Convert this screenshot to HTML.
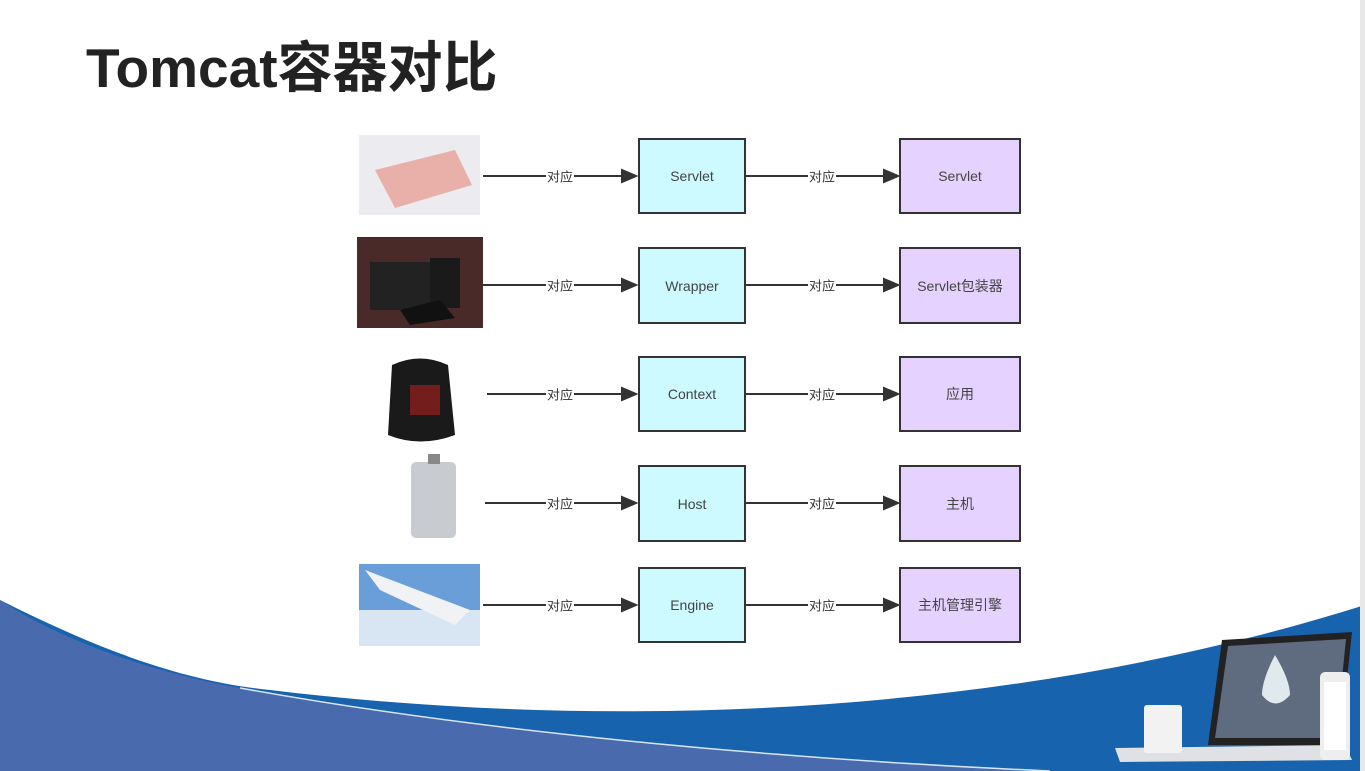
<!DOCTYPE html>
<html><head><meta charset="utf-8"><style>
body{margin:0;width:1365px;height:771px;position:relative;overflow:hidden;background:#fff;font-family:"Liberation Sans","Noto Sans CJK SC",sans-serif}
h1{position:absolute;left:86px;top:23px;margin:0;font-size:55px;font-weight:bold;color:#222;letter-spacing:0}
.box{position:absolute;border:2px solid #333;box-sizing:border-box;display:flex;align-items:center;justify-content:center;font-size:14px;color:#444}
.c{left:638px;width:108px;background:#ccfaff}
.p{left:899px;width:122px;background:#e6d2ff}
.lbl{position:absolute;font-size:13px;color:#333;background:#fff;padding:0 1px;transform:translate(-50%,-50%)}
</style></head><body>
<svg style="position:absolute;left:0;top:0" width="1365" height="771">
<path d="M0,600 C80,640 170,680 270,690 C600,730 1000,720 1365,605 L1365,771 L0,771 Z" fill="#1863ad"/>
<path d="M0,600 C60,640 150,672 240,688 C500,735 800,760 1050,771 L0,771 Z" fill="#4a6aae"/>
<path d="M240,688 C500,735 800,760 1050,771" stroke="#d8e4f4" stroke-width="1.5" fill="none"/>
<rect x="1360" y="0" width="5" height="771" fill="#e8e8e8"/>
<g stroke="#333" stroke-width="2" fill="#333">
<line x1="483" y1="176" x2="626" y2="176"/><polygon points="622,170 636,176 622,182"/>
<line x1="746" y1="176" x2="886" y2="176"/><polygon points="884,170 898,176 884,182"/>
<line x1="483" y1="285" x2="626" y2="285"/><polygon points="622,279 636,285 622,291"/>
<line x1="746" y1="285" x2="886" y2="285"/><polygon points="884,279 898,285 884,291"/>
<line x1="487" y1="394" x2="626" y2="394"/><polygon points="622,388 636,394 622,400"/>
<line x1="746" y1="394" x2="886" y2="394"/><polygon points="884,388 898,394 884,400"/>
<line x1="485" y1="503" x2="626" y2="503"/><polygon points="622,497 636,503 622,509"/>
<line x1="746" y1="503" x2="886" y2="503"/><polygon points="884,497 898,503 884,509"/>
<line x1="483" y1="605" x2="626" y2="605"/><polygon points="622,599 636,605 622,611"/>
<line x1="746" y1="605" x2="886" y2="605"/><polygon points="884,599 898,605 884,611"/>
</g>
<rect x="359" y="135" width="121" height="80" fill="#ecebf0"/>
<polygon points="375,170 455,150 472,185 395,208" fill="#e8b0a8"/>
<rect x="357" y="237" width="126" height="91" fill="#4a2a28"/>
<rect x="370" y="262" width="60" height="48" fill="#222"/><rect x="430" y="258" width="30" height="50" fill="#1a1a1a"/><polygon points="400,310 440,300 455,318 410,325" fill="#111"/>
<path d="M392,365 Q420,352 448,365 L455,435 Q420,448 388,435 Z" fill="#1a1a1a"/><rect x="410" y="385" width="30" height="30" fill="#b02020" opacity=".6"/>
<rect x="411" y="462" width="45" height="76" rx="5" fill="#c8cbd0"/><rect x="428" y="454" width="12" height="10" fill="#888"/>
<rect x="359" y="564" width="121" height="82" fill="#6a9ed8"/><rect x="359" y="610" width="121" height="36" fill="#d8e6f4"/><polygon points="365,570 470,610 455,625 380,590" fill="#f0f2f6"/>
<polygon points="1222,640 1352,632 1340,745 1208,745" fill="#222"/>
<polygon points="1228,646 1346,639 1336,738 1215,738" fill="#5f6b7e"/>
<path d="M1275,655 Q1262,680 1262,695 Q1275,712 1290,695 Q1290,680 1275,655Z" fill="#dfe9ee"/>
<polygon points="1115,748 1345,745 1352,760 1120,762" fill="#dfe1e5"/>
<rect x="1144" y="705" width="38" height="48" rx="3" fill="#f2f2f2"/>
<rect x="1320" y="672" width="30" height="88" rx="5" fill="#eee"/><rect x="1324" y="682" width="22" height="68" fill="#fff"/>
</svg>
<h1>Tomcat容器对比</h1>
<div class="box c" style="top:138px;height:76px">Servlet</div>
<div class="box p" style="top:138px;height:76px">Servlet</div>
<div class="box c" style="top:247px;height:77px">Wrapper</div>
<div class="box p" style="top:247px;height:77px">Servlet包装器</div>
<div class="box c" style="top:356px;height:76px">Context</div>
<div class="box p" style="top:356px;height:76px">应用</div>
<div class="box c" style="top:465px;height:77px">Host</div>
<div class="box p" style="top:465px;height:77px">主机</div>
<div class="box c" style="top:567px;height:76px">Engine</div>
<div class="box p" style="top:567px;height:76px">主机管理引擎</div>
<div class="lbl" style="left:560px;top:176px">对应</div><div class="lbl" style="left:822px;top:176px">对应</div>
<div class="lbl" style="left:560px;top:285px">对应</div><div class="lbl" style="left:822px;top:285px">对应</div>
<div class="lbl" style="left:560px;top:394px">对应</div><div class="lbl" style="left:822px;top:394px">对应</div>
<div class="lbl" style="left:560px;top:503px">对应</div><div class="lbl" style="left:822px;top:503px">对应</div>
<div class="lbl" style="left:560px;top:605px">对应</div><div class="lbl" style="left:822px;top:605px">对应</div>
</body></html>
